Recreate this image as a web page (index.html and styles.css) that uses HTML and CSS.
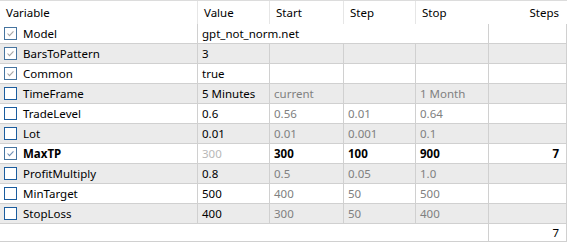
FILE: index.html
```html
<!DOCTYPE html>
<html>
<head>
<meta charset="utf-8">
<link rel="stylesheet" href="styles.css">
</head>
<body>
<div class="grid">
  <div class="row head">
    <div class="c hc">Variable</div>
    <div class="c hc">Value</div>
    <div class="c hc">Start</div>
    <div class="c hc">Step</div>
    <div class="c hc nosep">Stop</div>
    <div class="c hc nosep right">Steps</div>
  </div>

  <div class="row">
    <div class="c name"><span class="cb on"><svg viewBox="0 0 13 13"><path d="M3 6.5 L5.3 9 L10 4"/></svg></span>Model</div>
    <div class="c span4">gpt_not_norm.net</div>
    <div class="c"></div>
  </div>

  <div class="row alt">
    <div class="c name"><span class="cb on"><svg viewBox="0 0 13 13"><path d="M3 6.5 L5.3 9 L10 4"/></svg></span>BarsToPattern</div>
    <div class="c">3</div>
    <div class="c"></div>
    <div class="c"></div>
    <div class="c"></div>
    <div class="c"></div>
  </div>

  <div class="row">
    <div class="c name"><span class="cb on"><svg viewBox="0 0 13 13"><path d="M3 6.5 L5.3 9 L10 4"/></svg></span>Common</div>
    <div class="c">true</div>
    <div class="c"></div>
    <div class="c"></div>
    <div class="c"></div>
    <div class="c"></div>
  </div>

  <div class="row alt">
    <div class="c name"><span class="cb"></span>TimeFrame</div>
    <div class="c">5 Minutes</div>
    <div class="c dim">current</div>
    <div class="c dim"></div>
    <div class="c dim">1 Month</div>
    <div class="c"></div>
  </div>

  <div class="row">
    <div class="c name"><span class="cb"></span>TradeLevel</div>
    <div class="c">0.6</div>
    <div class="c dim">0.56</div>
    <div class="c dim">0.01</div>
    <div class="c dim">0.64</div>
    <div class="c"></div>
  </div>

  <div class="row alt">
    <div class="c name"><span class="cb"></span>Lot</div>
    <div class="c">0.01</div>
    <div class="c dim">0.01</div>
    <div class="c dim">0.001</div>
    <div class="c dim">0.1</div>
    <div class="c"></div>
  </div>

  <div class="row bold">
    <div class="c name"><span class="cb on act"><svg viewBox="0 0 13 13"><path d="M3 6.5 L5.3 9 L10 4"/></svg></span>MaxTP</div>
    <div class="c faint">300</div>
    <div class="c">300</div>
    <div class="c">100</div>
    <div class="c">900</div>
    <div class="c right">7</div>
  </div>

  <div class="row alt">
    <div class="c name"><span class="cb"></span>ProfitMultiply</div>
    <div class="c">0.8</div>
    <div class="c dim">0.5</div>
    <div class="c dim">0.05</div>
    <div class="c dim">1.0</div>
    <div class="c"></div>
  </div>

  <div class="row">
    <div class="c name"><span class="cb"></span>MinTarget</div>
    <div class="c">500</div>
    <div class="c dim">400</div>
    <div class="c dim">50</div>
    <div class="c dim">500</div>
    <div class="c"></div>
  </div>

  <div class="row alt">
    <div class="c name"><span class="cb"></span>StopLoss</div>
    <div class="c">400</div>
    <div class="c dim">300</div>
    <div class="c dim">50</div>
    <div class="c dim">400</div>
    <div class="c"></div>
  </div>

  <div class="row foot">
    <div class="c span5"></div>
    <div class="c right">7</div>
  </div>
</div>
</body>
</html>
```

FILE: styles.css
```css
html, body {
  margin: 0;
  padding: 0;
  background: #ffffff;
}

body {
  font-family: "Noto Sans", "Open Sans", sans-serif;
  font-size: 11.5px;
  color: #000000;
}

.grid {
  width: 567px;
}

.row {
  display: grid;
  grid-template-columns: 198px 72px 74px 72px 73px 78px;
  height: 20px;
  box-sizing: border-box;
  border-bottom: 1px solid #d0d0d0;
  background: #ffffff;
}

.row.alt {
  background: #ebebeb;
}

.row.head {
  height: 24px;
  border-top: 1px solid #dcdcdc;
  border-bottom: none;
}

.row.foot {
  height: 18px;
}

.c {
  box-sizing: border-box;
  border-right: 1px solid #d0d0d0;
  padding-left: 4px;
  padding-top: 1px;
  line-height: 18px;
  white-space: nowrap;
  overflow: hidden;
  display: flex;
  align-items: center;
}

.hc {
  padding-left: 6px;
  border-right-color: #e6e6e6;
  line-height: 22px;
}

.hc.nosep {
  border-right-color: transparent;
}

.right {
  justify-content: flex-end;
  padding-left: 0;
  padding-right: 7px;
}

.span4 {
  grid-column: span 4;
}

.span5 {
  grid-column: span 5;
  border-right: 1px solid #d0d0d0;
}

.name {
  padding-left: 4px;
  padding-top: 0;
}

.cb {
  width: 13px;
  height: 13px;
  box-sizing: border-box;
  border: 1px solid #1a5c9e;
  background: #ffffff;
  margin-right: 6px;
  flex: none;
  display: flex;
}

.cb.on {
  border-color: #46749f;
}

.cb svg {
  width: 11px;
  height: 11px;
}

.cb svg path {
  fill: none;
  stroke: #a6a6a6;
  stroke-width: 1.3;
}

.cb.act svg path {
  stroke: #7090b5;
}

.name .lbl {
  padding-top: 1px;
}

.dim {
  color: #808080;
}

.faint {
  color: #b8b8b8;
}

.bold .c {
  font-weight: bold;
}

.bold .faint {
  font-weight: normal;
}
```
